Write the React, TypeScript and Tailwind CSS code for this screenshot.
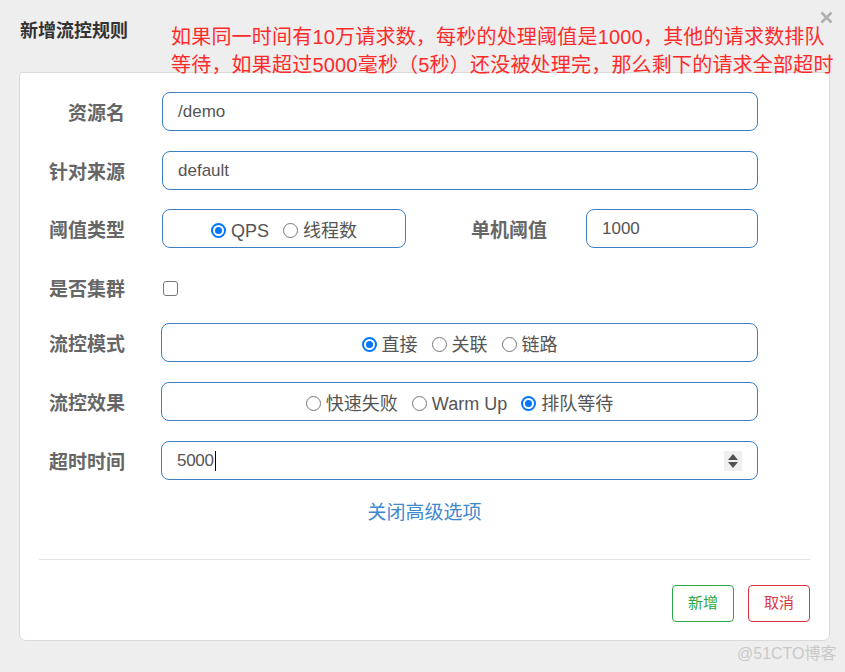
import React from "react";

const FONT = '"Liberation Sans", "Noto Sans CJK SC", sans-serif';

function Radio({ checked }: { checked?: boolean }) {
  return checked ? (
    <span className="inline-flex h-[15px] w-[15px] shrink-0 items-center justify-center rounded-full border-[2px] border-[#0075ff] bg-white">
      <span className="h-[7px] w-[7px] rounded-full bg-[#0075ff]" />
    </span>
  ) : (
    <span className="inline-block h-[15px] w-[15px] shrink-0 rounded-full border border-[#767676] bg-white" />
  );
}

function RadioItem({ checked, label }: { checked?: boolean; label: string }) {
  return (
    <span className="flex items-center gap-[5px]">
      <Radio checked={checked} />
      <span className="text-[18px] leading-none text-[#555]">{label}</span>
    </span>
  );
}

function Label({ children }: { children: React.ReactNode }) {
  return (
    <div className="w-[105px] shrink-0 pt-[3px] text-right text-[19px] font-bold leading-none text-[#666]">
      {children}
    </div>
  );
}

const box =
  "h-[39px] rounded-[8px] border border-[#3d80c2] bg-white flex items-center";

export default function App() {
  return (
    <div
      className="relative h-[672px] w-[845px] overflow-hidden bg-[#eeeeee]"
      style={{ fontFamily: FONT }}
    >
      {/* close */}
      <svg
        className="absolute left-[820px] top-[11px]"
        width="13"
        height="13"
        viewBox="0 0 13 13"
      >
        <path d="M1.5 1.5 L11.5 11.5 M11.5 1.5 L1.5 11.5" stroke="#b0b0b0" strokeWidth="2.6" strokeLinecap="butt" />
      </svg>

      {/* header */}
      <div className="flex h-[72px] items-start">
        <div className="ml-[20px] mt-[21px] w-[151px] shrink-0 text-[18px] font-bold leading-[20px] text-[#333]">
          新增流控规则
        </div>
        <div className="mt-[23px] text-[20px] leading-[28px] tracking-[0.2px] text-[#ff2a2a]">
          <div className="whitespace-nowrap">如果同一时间有10万请求数，每秒的处理阈值是1000，其他的请求数排队</div>
          <div className="whitespace-nowrap">等待，如果超过5000毫秒（5秒）还没被处理完，那么剩下的请求全部超时</div>
        </div>
      </div>

      {/* card */}
      <div className="ml-[19px] h-[569px] w-[811px] rounded-b-[7px] rounded-t-[3px] border border-[#d9d9d9] bg-white pt-[19px]">
        <div className="pr-[71px]">
          {/* row 1 */}
          <div className="mb-[20px] flex items-center">
            <Label>资源名</Label>
            <div className={`${box} ml-[37px] flex-1 pl-[15px]`}>
              <span className="text-[17px] text-[#555]">/demo</span>
            </div>
          </div>
          {/* row 2 */}
          <div className="mb-[19px] flex items-center">
            <Label>针对来源</Label>
            <div className={`${box} ml-[37px] flex-1 pl-[15px]`}>
              <span className="text-[17px] text-[#555]">default</span>
            </div>
          </div>
          {/* row 3 */}
          <div className="mb-[21px] flex items-center">
            <Label>阈值类型</Label>
            <div className={`${box} ml-[37px] w-[244px] justify-center gap-[14px] pt-[4px]`}>
              <span className="flex items-center gap-[5px]">
                <Radio checked />
                <span className="text-[18px] leading-none text-[#555]">QPS</span>
              </span>
              <RadioItem label="线程数" />
            </div>
            <div className="ml-[65px] w-[77px] shrink-0 pt-[3px] text-[19px] font-bold leading-none text-[#666]">
              单机阈值
            </div>
            <div className={`${box} ml-[38px] flex-1 pl-[15px]`}>
              <span className="text-[17px] text-[#555]">1000</span>
            </div>
          </div>
          {/* row 4 */}
          <div className="mb-[16px] flex h-[38px] items-center">
            <Label>是否集群</Label>
            <span className="ml-[38px] mt-[1px] inline-block h-[15px] w-[15px] rounded-[3px] border border-[#767676] bg-white" />
          </div>
          {/* row 5 */}
          <div className="mb-[20px] flex items-center">
            <Label>流控模式</Label>
            <div className={`${box} ml-[36px] flex-1 justify-center gap-[14px] pt-[4px]`}>
              <RadioItem checked label="直接" />
              <RadioItem label="关联" />
              <RadioItem label="链路" />
            </div>
          </div>
          {/* row 6 */}
          <div className="mb-[20px] flex items-center">
            <Label>流控效果</Label>
            <div className={`${box} ml-[36px] flex-1 justify-center gap-[14px] pt-[4px]`}>
              <RadioItem label="快速失败" />
              <RadioItem label="Warm Up" />
              <RadioItem checked label="排队等待" />
            </div>
          </div>
          {/* row 7 */}
          <div className="flex items-center">
            <Label>超时时间</Label>
            <div className={`${box} ml-[36px] flex-1 pl-[15px] pr-[15px]`}>
              <span className="text-[17px] tracking-[-0.3px] text-[#555]">5000</span>
              <span className="ml-[1px] h-[20px] w-[1px] bg-black" />
              <div className="ml-auto flex h-[20px] w-[18px] flex-col items-center justify-center gap-[2px] bg-[#efefef]">
                <svg width="10" height="6" viewBox="0 0 10 6">
                  <path d="M5 0 L10 6 L0 6 Z" fill="#505050" />
                </svg>
                <svg width="10" height="6" viewBox="0 0 10 6">
                  <path d="M0 0 L10 0 L5 6 Z" fill="#505050" />
                </svg>
              </div>
            </div>
          </div>
        </div>

        {/* link */}
        <div className="mt-[21px] text-center text-[19px] leading-[24px] text-[#4189cf]">
          关闭高级选项
        </div>

        {/* divider */}
        <div className="mx-[19px] mt-[34px] h-px bg-[#e3e3e3]" />

        {/* buttons */}
        <div className="mr-[19px] mt-[25px] flex justify-end gap-[14px]">
          <div className="flex h-[37px] w-[62px] items-center justify-center rounded-[4px] border border-[#2aa745] text-[15px] text-[#2aa745]">
            新增
          </div>
          <div className="flex h-[37px] w-[62px] items-center justify-center rounded-[4px] border border-[#dc3545] text-[15px] text-[#dc3545]">
            取消
          </div>
        </div>
      </div>

      {/* watermark */}
      <div className="absolute left-[737px] top-[644px] text-[16px] leading-[20px] text-[#c9c9c9]">
        @51CTO博客
      </div>
    </div>
  );
}
